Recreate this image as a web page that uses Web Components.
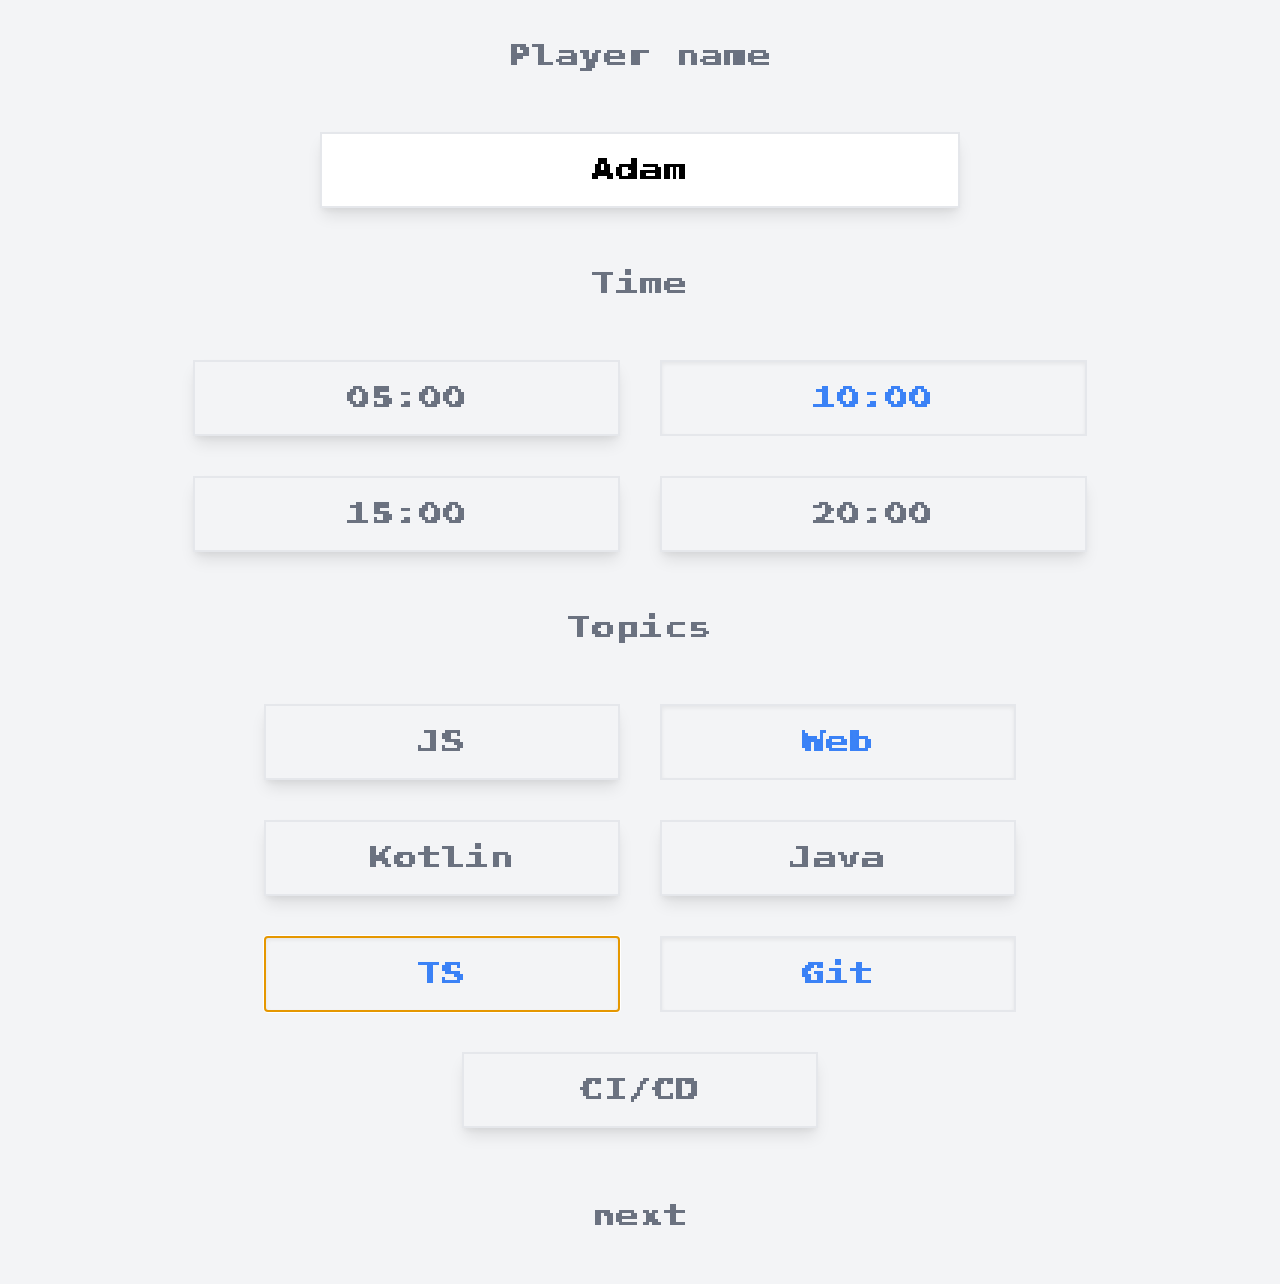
<!DOCTYPE html>
<html lang="en"><head><meta charset="utf-8"><title>New game</title>
<style>html,body{margin:0;background:#f3f4f6}body{min-height:1284px}</style></head><body>
<game-setup></game-setup>
<script>
class PixelText extends HTMLElement{
  constructor(){super();this.attachShadow({mode:'open'}).innerHTML=`
  <style>
  :host{display:flex;justify-content:center;height:36px;font:bold 30px/36px "DejaVu Sans Mono",monospace}
  .grid{display:flex;justify-content:center;width:288px;height:36px;filter:url(#pixels)}
  span{display:block;white-space:pre;-webkit-text-stroke:.3px currentColor;transform:translate(-1.3px,.3px) scaleX(1.329)}
  :host([digits]) span{font-family:"Noto Sans CJK JP",sans-serif;font-size:28px;font-feature-settings:"hwid";-webkit-text-stroke:0;transform:translate(-1.2px,-3.3px) scaleX(1.714)}
  svg{display:block;width:0;height:0}
  </style>
  <svg><filter id="pixels" filterUnits="userSpaceOnUse" x="0" y="0" width="288" height="36" color-interpolation-filters="sRGB">
    <feFlood x="1" y="1" width="1" height="1" flood-color="#000"/>
    <feOffset dx="0" dy="0" x="0" y="0" width="3" height="3"/>
    <feTile result="dots"/>
    <feComposite in="SourceGraphic" in2="dots" operator="in"/>
    <feComponentTransfer><feFuncA type="discrete" tableValues="0 1"/></feComponentTransfer>
    <feMorphology operator="dilate" radius="1"/>
  </filter></svg>
  <div class="grid"><span><slot></slot></span></div>`}
}
customElements.define('pixel-text',PixelText);
class SetupTitle extends HTMLElement{
  constructor(){super();this.attachShadow({mode:'open'}).innerHTML=`
  <style>:host{display:block;box-sizing:border-box;height:72px;padding:18px 0;color:#6b7280}</style>
  <pixel-text><slot></slot></pixel-text>`}
}
customElements.define('setup-title',SetupTitle);
class SetupOption extends HTMLElement{
  constructor(){super();this.attachShadow({mode:'open'}).innerHTML=`
  <style>
  :host{display:block;box-sizing:border-box;flex:none;height:76px;padding:18px 0;border:2px solid #e5e7eb;color:#6b7280;box-shadow:0 10px 15px -3px rgba(0,0,0,.1),0 4px 6px -2px rgba(0,0,0,.05)}
  :host([selected]){color:#3b82f6;box-shadow:inset 0 2px 4px rgba(0,0,0,.06)}
  :host([focused]){border-color:#e59700;border-radius:4px;box-shadow:0 0 0 1px #fff,inset 0 2px 4px rgba(0,0,0,.06)}
  :host([field]){background:#fff;color:#000}
  </style><pixel-text><slot></slot></pixel-text>`}
  connectedCallback(){this.shadowRoot.querySelector('pixel-text').toggleAttribute('digits',this.hasAttribute('digits'))}
}
customElements.define('setup-option',SetupOption);
class OptionGroup extends HTMLElement{
  constructor(){super();this.attachShadow({mode:'open'}).innerHTML=`
  <style>:host{display:flex;flex-wrap:wrap;justify-content:center;gap:40px}
  ::slotted(setup-option){width:var(--option-width)}</style><slot></slot>`}
}
customElements.define('option-group',OptionGroup);
class GameSetup extends HTMLElement{
  constructor(){super();this.attachShadow({mode:'open'}).innerHTML=`
  <style>
  :host{display:flex;flex-direction:column;box-sizing:border-box;width:1280px;height:1284px;padding-top:20px;background:#f3f4f6}
  setup-title{margin-bottom:40px}
  option-group{margin-bottom:40px}
  .name{--option-width:640px}
  .time{--option-width:426.67px;padding:0 180px}
  .topics{--option-width:355.56px;padding:0 260px;margin-bottom:52px}
  .next{margin:0}
  </style>
  <setup-title>Player name</setup-title>
  <option-group class="name"><setup-option field>Adam</setup-option></option-group>
  <setup-title>Time</setup-title>
  <option-group class="time"><setup-option digits>05:00</setup-option><setup-option digits selected>10:00</setup-option><setup-option digits>15:00</setup-option><setup-option digits>20:00</setup-option></option-group>
  <setup-title>Topics</setup-title>
  <option-group class="topics"><setup-option>JS</setup-option><setup-option selected>Web</setup-option><setup-option>Kotlin</setup-option><setup-option>Java</setup-option><setup-option selected focused>TS</setup-option><setup-option selected>Git</setup-option><setup-option>CI/CD</setup-option></option-group>
  <setup-title class="next" role="button">next</setup-title>`}
}
customElements.define('game-setup',GameSetup);
</script></body></html>
